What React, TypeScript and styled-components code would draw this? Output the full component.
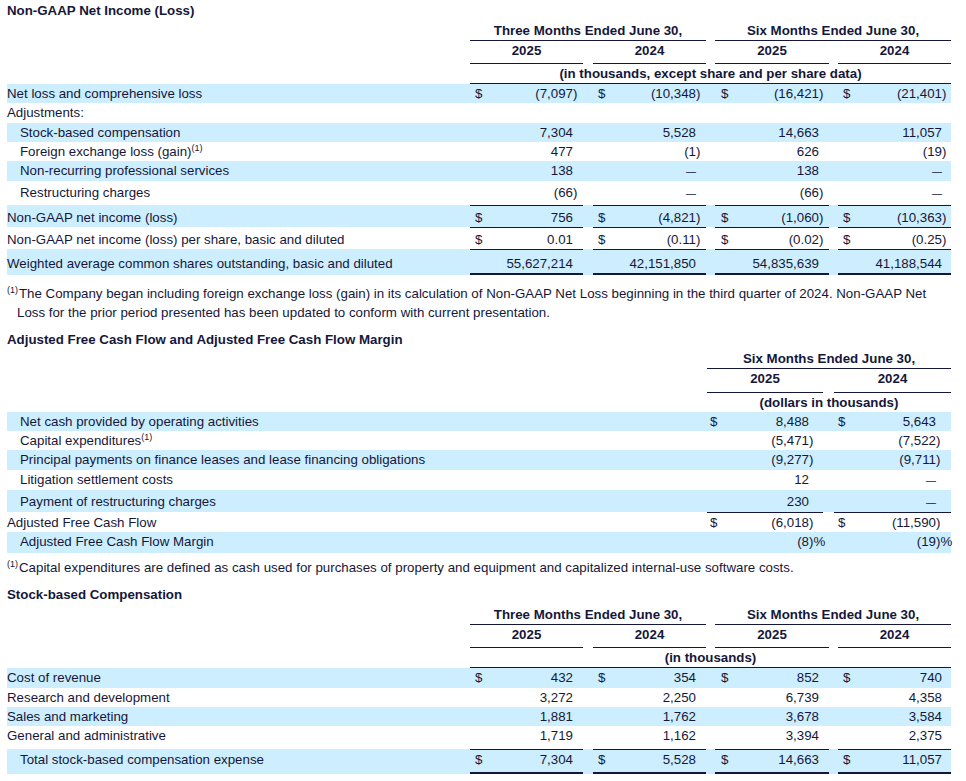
import React from 'react';
import styled, { createGlobalStyle } from 'styled-components';

const INK = '#15173a';
const SHADE = '#cceeff';

const GlobalStyle = createGlobalStyle`
  html, body { margin: 0; padding: 0; background: #ffffff; }
  body {
    font-family: "Liberation Sans", Arial, sans-serif;
    color: ${INK};
  }
`;

const Page = styled.div`
  width: 944px;
  padding: 0 7px;
  font-size: 13.3px;
  line-height: 19px;
  color: ${INK};
`;

const SectionTitle = styled.div<{ $mt: number; $pt?: number }>`
  margin-top: ${p => p.$mt}px;
  padding-top: ${p => p.$pt ?? 0}px;
  font-weight: 700;
  white-space: nowrap;
`;

const Footnote = styled.div<{ $mt: number }>`
  margin-top: ${p => p.$mt}px;
  padding-left: 10px;
  text-indent: -10px;
`;

const Sup = styled.sup`
  font-size: 9px;
  line-height: 0;
  vertical-align: 5px;
  margin-right: 1px;
`;

const Grid = styled.div<{ $cols: string; $shade?: boolean }>`
  display: grid;
  grid-template-columns: ${p => p.$cols};
  background: ${p => (p.$shade ? SHADE : 'transparent')};
`;

const HeadCell = styled.div<{ $span: string; $pt?: number; $pb?: number; $rule?: boolean }>`
  grid-column: ${p => p.$span};
  padding-top: ${p => p.$pt ?? 0}px;
  padding-bottom: ${p => p.$pb ?? 0}px;
  border-bottom: ${p => (p.$rule ? `1px solid ${INK}` : '0')};
  text-align: center;
  font-weight: 700;
  white-space: nowrap;
`;

type Box = { $pt: number; $pb: number; $rule: boolean; $thick: boolean };

const LabelCell = styled.div<Box & { $indent: boolean }>`
  grid-column: 1;
  padding: ${p => p.$pt}px 0 ${p => p.$pb}px ${p => (p.$indent ? 13 : 0)}px;
  border-top: ${p => (p.$rule ? '1px solid transparent' : '0')};
  border-bottom: ${p => (p.$thick ? '2px solid transparent' : '0')};
  white-space: nowrap;
`;

const MoneyCell = styled.div<Box & { $col: number }>`
  grid-column: ${p => p.$col};
  display: flex;
  padding-top: ${p => p.$pt}px;
  padding-bottom: ${p => p.$pb}px;
  border-top: ${p => (p.$rule ? `1px solid ${INK}` : '0')};
  border-bottom: ${p => (p.$thick ? `2px solid ${INK}` : '0')};
  white-space: nowrap;
`;

const Dollar = styled.span<{ $pad: number }>`
  padding-left: ${p => p.$pad}px;
`;

const Num = styled.span`
  flex: 1;
  text-align: right;
`;

const Dash = styled.span`
  font-size: 10px;
`;

const Suffix = styled.span<{ $w: number }>`
  flex: none;
  width: ${p => p.$w}px;
`;

type BodyRow = {
  label: React.ReactNode;
  indent?: boolean;
  shade?: boolean;
  dollar?: boolean;
  vals?: string[];
  pt?: number;
  pb?: number;
  rule?: boolean;
  thick?: boolean;
};

type Spec = {
  cols: string;
  groupCols: number[];
  suffixW: number[];
  dollarPad: number[];
};

function split(v: string) {
  if (v.endsWith(')%')) return { num: v.slice(0, -2), suffix: ')%' };
  if (v.endsWith(')')) return { num: v.slice(0, -1), suffix: ')' };
  return { num: v, suffix: '' };
}

function Body({ spec, rows }: { spec: Spec; rows: BodyRow[] }) {
  return (
    <>
      {rows.map((r, i) => {
        const box: Box = {
          $pt: r.pt ?? 0,
          $pb: r.pb ?? 0,
          $rule: !!r.rule,
          $thick: !!r.thick,
        };
        return (
          <Grid key={i} $cols={spec.cols} $shade={r.shade}>
            <LabelCell {...box} $indent={!!r.indent}>
              {r.label}
            </LabelCell>
            {r.vals &&
              r.vals.map((v, j) => {
                const { num, suffix } = split(v);
                return (
                  <MoneyCell key={j} {...box} $col={spec.groupCols[j]}>
                    {r.dollar && <Dollar $pad={spec.dollarPad[j]}>$</Dollar>}
                    <Num>{num === '—' ? <Dash>—</Dash> : num}</Num>
                    <Suffix $w={spec.suffixW[j]}>{suffix}</Suffix>
                  </MoneyCell>
                );
              })}
          </Grid>
        );
      })}
    </>
  );
}

const quarterSpec: Spec = {
  cols: '463px 113px 10px 113px 9px 114px 9px 113px',
  groupCols: [2, 4, 6, 8],
  suffixW: [10, 10, 10, 9],
  dollarPad: [5, 5, 6, 5],
};

const cashSpec: Spec = {
  cols: '700px 116px 11px 117px',
  groupCols: [2, 4],
  suffixW: [14, 15],
  dollarPad: [3, 4],
};

function QuarterHead({ unit }: { unit: string }) {
  const c = quarterSpec.cols;
  return (
    <>
      <Grid $cols={c}>
        <HeadCell $span="2 / 5" $pt={1} $rule>
          Three Months Ended June 30,
        </HeadCell>
        <HeadCell $span="6 / 9" $pt={1} $rule>
          Six Months Ended June 30,
        </HeadCell>
      </Grid>
      <Grid $cols={c}>
        <HeadCell $span="2" $pb={3} $rule>2025</HeadCell>
        <HeadCell $span="4" $pb={3} $rule>2024</HeadCell>
        <HeadCell $span="6" $pb={3} $rule>2025</HeadCell>
        <HeadCell $span="8" $pb={3} $rule>2024</HeadCell>
      </Grid>
      <Grid $cols={c}>
        <HeadCell $span="2 / 9" $rule>
          {unit}
        </HeadCell>
      </Grid>
    </>
  );
}

const netIncomeRows: BodyRow[] = [
  { label: 'Net loss and comprehensive loss', shade: true, dollar: true, vals: ['(7,097)', '(10,348)', '(16,421)', '(21,401)'] },
  { label: 'Adjustments:', pb: 1 },
  { label: 'Stock-based compensation', indent: true, shade: true, vals: ['7,304', '5,528', '14,663', '11,057'] },
  {
    label: (
      <>
        Foreign exchange loss (gain)<Sup>(1)</Sup>
      </>
    ),
    indent: true,
    vals: ['477', '(1)', '626', '(19)'],
  },
  { label: 'Non-recurring professional services', indent: true, shade: true, vals: ['138', '—', '138', '—'] },
  { label: 'Restructuring charges', indent: true, pt: 2, pb: 2, vals: ['(66)', '—', '(66)', '—'] },
  { label: 'Non-GAAP net income (loss)', shade: true, dollar: true, rule: true, pt: 2, vals: ['756', '(4,821)', '(1,060)', '(10,363)'] },
  { label: 'Non-GAAP net income (loss) per share, basic and diluted', dollar: true, rule: true, pt: 2, vals: ['0.01', '(0.11)', '(0.02)', '(0.25)'] },
  {
    label: 'Weighted average common shares outstanding, basic and diluted',
    shade: true,
    rule: true,
    thick: true,
    pt: 4,
    vals: ['55,627,214', '42,151,850', '54,835,639', '41,188,544'],
  },
];

const cashRows: BodyRow[] = [
  { label: 'Net cash provided by operating activities', indent: true, shade: true, dollar: true, vals: ['8,488', '5,643'] },
  {
    label: (
      <>
        Capital expenditures<Sup>(1)</Sup>
      </>
    ),
    indent: true,
    vals: ['(5,471)', '(7,522)'],
  },
  { label: 'Principal payments on finance leases and lease financing obligations', indent: true, shade: true, pb: 1, vals: ['(9,277)', '(9,711)'] },
  { label: 'Litigation settlement costs', indent: true, vals: ['12', '—'] },
  { label: 'Payment of restructuring charges', indent: true, shade: true, pt: 2, vals: ['230', '—'] },
  { label: 'Adjusted Free Cash Flow', dollar: true, rule: true, vals: ['(6,018)', '(11,590)'] },
  { label: 'Adjusted Free Cash Flow Margin', indent: true, shade: true, pb: 2, vals: ['(8)%', '(19)%'] },
];

const sbcRows: BodyRow[] = [
  { label: 'Cost of revenue', shade: true, dollar: true, pb: 1, vals: ['432', '354', '852', '740'] },
  { label: 'Research and development', vals: ['3,272', '2,250', '6,739', '4,358'] },
  { label: 'Sales and marketing', shade: true, vals: ['1,881', '1,762', '3,678', '3,584'] },
  { label: 'General and administrative', pb: 4, vals: ['1,719', '1,162', '3,394', '2,375'] },
  {
    label: 'Total stock-based compensation expense',
    indent: true,
    shade: true,
    dollar: true,
    rule: true,
    thick: true,
    pb: 3,
    vals: ['7,304', '5,528', '14,663', '11,057'],
  },
];

export default function App() {
  return (
    <>
      <GlobalStyle />
      <Page>
        <SectionTitle $mt={0} $pt={1}>Non-GAAP Net Income (Loss)</SectionTitle>
        <QuarterHead unit="(in thousands, except share and per share data)" />
        <Body spec={quarterSpec} rows={netIncomeRows} />

        <Footnote $mt={9}>
          <Sup>(1)</Sup>The Company began including foreign exchange loss (gain) in its calculation of Non-GAAP Net Loss
          beginning in the third quarter of 2024. Non-GAAP Net
          <br />
          Loss for the prior period presented has been updated to conform with current presentation.
        </Footnote>

        <SectionTitle $mt={8}>Adjusted Free Cash Flow and Adjusted Free Cash Flow Margin</SectionTitle>
        <Grid $cols={cashSpec.cols}>
          <HeadCell $span="2 / 5" $rule>
            Six Months Ended June 30,
          </HeadCell>
        </Grid>
        <Grid $cols={cashSpec.cols}>
          <HeadCell $span="2" $pb={4} $rule>2025</HeadCell>
          <HeadCell $span="4" $pb={4} $rule>2024</HeadCell>
        </Grid>
        <Grid $cols={cashSpec.cols}>
          <HeadCell $span="2 / 5">(dollars in thousands)</HeadCell>
        </Grid>
        <Body spec={cashSpec} rows={cashRows} />

        <Footnote $mt={5}>
          <Sup>(1)</Sup>Capital expenditures are defined as cash used for purchases of property and equipment and
          capitalized internal-use software costs.
        </Footnote>

        <SectionTitle $mt={8}>Stock-based Compensation</SectionTitle>
        <QuarterHead unit="(in thousands)" />
        <Body spec={quarterSpec} rows={sbcRows} />
      </Page>
    </>
  );
}
